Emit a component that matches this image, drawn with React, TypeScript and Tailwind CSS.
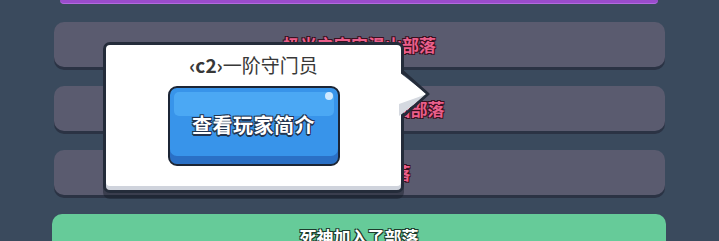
const rows = [
  "极光之宇宙温山部落",
  "雪域苍穹之巅王国部落",
  "星河守望部落",
];

const pinkText =
  "font-bold text-[17px] text-[#ea5f8b] [text-shadow:1px_1px_0_#3a1020,-1px_-1px_0_#3a1020,1px_-1px_0_#3a1020,-1px_1px_0_#3a1020]";

export default function App() {
  return (
    <div
      className="relative w-[719px] h-[241px] overflow-hidden bg-[#3a4a5d]"
      style={{ fontFamily: '"Noto Sans CJK SC", "Noto Sans", sans-serif' }}
    >
      {/* top purple bar (cut off) */}
      <div className="ml-[60px] w-[598px] h-[4px] rounded-b-[6px] bg-[#9a4ccc] border-b border-[#b36ae0]" />

      {/* list rows */}
      <div className="mt-[18px] flex flex-col gap-[19px]">
        {rows.map((name) => (
          <div
            key={name}
            className="ml-[54px] w-[611px] h-[45px] rounded-[10px] bg-[#5a5b6f] shadow-[0_3px_0_#2b3344] flex items-center justify-center"
          >
            <span className={pinkText}>{name}</span>
          </div>
        ))}
        <div className="ml-[52px] w-[614px] h-[45px] rounded-[10px] bg-[#66cb99] flex items-center justify-center">
          <span className="font-bold text-[17px] text-white [text-shadow:1px_1px_0_#1d3b2c,-1px_-1px_0_#1d3b2c,1px_-1px_0_#1d3b2c,-1px_1px_0_#1d3b2c]">
            死神加入了部落
          </span>
        </div>
      </div>

      {/* popup */}
      <div className="absolute left-[103px] top-[42px] w-[301px] h-[151px]">
        <div className="relative h-full rounded-[7px] border-[3px] border-[#242c3a] bg-white shadow-[inset_0_-4px_0_#cfd3dc,0_6px_0_rgba(20,26,38,0.45)] flex flex-col items-center">
          <div className="mt-[8px] text-[19px] leading-[24px] text-[#383838]">
            <span className="font-bold">‹c2›</span>一阶守门员
          </div>
          <div className="mt-[9px] relative w-[172px] h-[80px] rounded-[9px] border-2 border-[#1c2535] bg-[#3894ea] overflow-hidden shadow-[inset_0_-8px_0_#2a70c6]">
            <div className="absolute left-[4px] right-[4px] top-[4px] h-[24px] rounded-[5px] bg-[#4ba8f4]" />
            <div className="absolute right-[5px] top-[4px] w-[8px] h-[8px] rounded-full bg-[#cfe9ff]" />
            <div className="relative h-full flex items-center justify-center pb-[2px]">
              <span className="font-bold text-[20px] tracking-[0.5px] text-white [text-shadow:1px_1px_0_#23344f,-1px_-1px_0_#23344f,1px_-1px_0_#23344f,-1px_1px_0_#23344f,0_2px_0_#23344f]">
                查看玩家简介
              </span>
            </div>
          </div>
        </div>
        {/* pointer */}
        <svg
          className="absolute left-[296px] top-[28px]"
          width="34"
          height="48"
          viewBox="0 0 34 48"
        >
          <polygon points="0,2 28,24 0,46" fill="#ffffff" />
          <polygon points="0,34 28,24 0,46" fill="#d5d9e0" />
          <polyline
            points="3,1 29,24 3,47"
            fill="none"
            stroke="#242c3a"
            strokeWidth="3"
            strokeLinejoin="round"
          />
        </svg>
      </div>
    </div>
  );
}
